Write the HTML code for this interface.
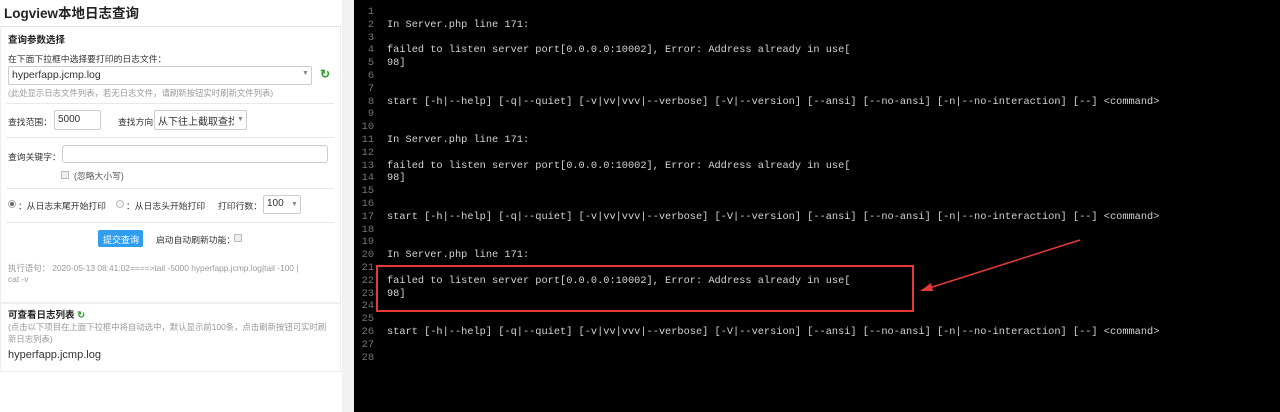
<!DOCTYPE html>
<html><head><meta charset="utf-8"><style>
*{margin:0;padding:0;box-sizing:border-box}
body{width:1280px;height:412px;background:#fff;font-family:"Liberation Sans","Noto Sans CJK SC",sans-serif;position:relative;overflow:hidden;color:#333}
.a{position:absolute;white-space:nowrap}
.s{font-size:8.8px;color:#333}
.g{font-size:8.4px;color:#999}
.hr{position:absolute;left:6px;width:328px;height:1px;background:#e8e8e8}
.box{position:absolute;border:1px solid #ccc;border-radius:2px;background:#fff}
#term{position:absolute;left:354px;top:0;width:926px;height:412px;background:#000}
.ln{position:absolute;left:0;width:20px;text-align:right;color:#777;font:10.3px "Liberation Mono",monospace}
.tx{position:absolute;left:33px;color:#d4d4d4;font:10.3px "Liberation Mono",monospace;white-space:pre}
</style></head><body>
<div style="position:absolute;left:342px;top:0;width:12px;height:412px;background:#f1f1f1"></div>
<div class="a" style="left:4px;top:2px;font-size:13.5px;font-weight:bold;color:#222">Logview本地日志查询</div>
<div style="position:absolute;left:0;top:26px;width:341px;height:1px;background:#e5e5e5"></div>
<div style="position:absolute;left:0;top:27px;width:341px;height:277px;border:1px solid #eee;border-top:none"></div>
<div class="a" style="left:8px;top:32px;font-size:9.5px;font-weight:bold;color:#222">查询参数选择</div>
<div class="a s" style="left:8px;top:52px">在下面下拉框中选择要打印的日志文件：</div>
<div class="box" style="left:8px;top:66px;width:304px;height:19px"></div>
<div class="a" style="left:12px;top:69px;font-size:10.5px;color:#333">hyperfapp.jcmp.log</div>
<div class="a" style="left:302px;top:70px;font-size:7px;color:#888">▼</div>
<div class="a" style="left:320px;top:67px;font-size:12px;color:#2a9a2a;font-weight:bold">↻</div>
<div class="a g" style="left:8px;top:87px">(此处显示日志文件列表，若无日志文件，请刷新按钮实时刷新文件列表)</div>
<div class="hr" style="top:103px"></div>
<div class="a s" style="left:8px;top:115px">查找范围：</div>
<div class="box" style="left:54px;top:110px;width:47px;height:20px"></div>
<div class="a" style="left:58px;top:114px;font-size:10px">5000</div>
<div class="a s" style="left:118px;top:115px">查找方向</div>
<div class="box" style="left:154px;top:110px;width:93px;height:20px"></div>
<div class="a" style="left:158px;top:113px;font-size:10px;overflow:hidden;width:76px">从下往上截取查找</div>
<div class="a" style="left:237px;top:116px;font-size:7px;color:#888">▼</div>
<div class="hr" style="top:137px"></div>
<div class="a s" style="left:8px;top:150px">查询关键字：</div>
<div class="box" style="left:62px;top:145px;width:266px;height:18px;border-radius:3px"></div>
<div style="position:absolute;left:61px;top:171px;width:8px;height:8px;border:1px solid #bbb;background:#eee"></div>
<div class="a s" style="left:74px;top:169px;color:#555">(忽略大小写)</div>
<div class="hr" style="top:188px"></div>
<div style="position:absolute;left:8px;top:200px;width:8px;height:8px;border:1px solid #aaa;border-radius:50%;background:#fff"><div style="width:4px;height:4px;margin:1px;background:#666;border-radius:50%"></div></div>
<div class="a s" style="left:18px;top:199px">：从日志末尾开始打印</div>
<div style="position:absolute;left:116px;top:200px;width:8px;height:8px;border:1px solid #bbb;border-radius:50%;background:#f4f4f4"></div>
<div class="a s" style="left:126px;top:199px">：从日志头开始打印</div>
<div class="a s" style="left:218px;top:199px">打印行数：</div>
<div class="box" style="left:263px;top:195px;width:38px;height:19px"></div>
<div class="a" style="left:267px;top:198px;font-size:10px">100</div>
<div class="a" style="left:291px;top:201px;font-size:7px;color:#888">▼</div>
<div class="hr" style="top:222px"></div>
<div style="position:absolute;left:98px;top:230px;width:45px;height:17px;background:#2f9ef0;border-radius:2px"></div>
<div class="a" style="left:103px;top:233px;font-size:9px;color:#fff">提交查询</div>
<div class="a s" style="left:156px;top:233px">启动自动刷新功能：</div>
<div style="position:absolute;left:234px;top:234px;width:8px;height:8px;border:1px solid #bbb;background:#eee"></div>
<div class="a g" style="left:8px;top:262px;color:#999">执行语句： 2020-05-13 08:41:02====&gt;tail -5000 hyperfapp.jcmp.log|tail -100 |</div>
<div class="a g" style="left:8px;top:274px">cat -v</div>
<div style="position:absolute;left:0;top:302px;width:341px;height:70px;border:1px solid #eee"></div>
<div class="a" style="left:8px;top:307px;font-size:9.5px;font-weight:bold;color:#222">可查看日志列表 <span style="color:#2a9a2a">↻</span></div>
<div class="a g" style="left:8px;top:321px">(点击以下项目在上面下拉框中将自动选中，默认显示前100条，点击刷新按钮可实时刷</div>
<div class="a g" style="left:8px;top:333px">新日志列表)</div>
<div class="a" style="left:8px;top:349px;font-size:11px;color:#333">hyperfapp.jcmp.log</div>

<div id="term">
<div class="ln" style="top:6px">1</div>
<div class="ln" style="top:18.8px">2</div><div class="tx" style="top:18.8px">In Server.php line 171:</div>
<div class="ln" style="top:31.6px">3</div>
<div class="ln" style="top:44.4px">4</div><div class="tx" style="top:44.4px">failed to listen server port[0.0.0.0:10002], Error: Address already in use[</div>
<div class="ln" style="top:57.2px">5</div><div class="tx" style="top:57.2px">98]</div>
<div class="ln" style="top:70px">6</div>
<div class="ln" style="top:82.8px">7</div>
<div class="ln" style="top:95.6px">8</div><div class="tx" style="top:95.6px">start [-h|--help] [-q|--quiet] [-v|vv|vvv|--verbose] [-V|--version] [--ansi] [--no-ansi] [-n|--no-interaction] [--] &lt;command&gt;</div>
<div class="ln" style="top:108.4px">9</div>
<div class="ln" style="top:121.2px">10</div>
<div class="ln" style="top:134px">11</div><div class="tx" style="top:134px">In Server.php line 171:</div>
<div class="ln" style="top:146.8px">12</div>
<div class="ln" style="top:159.6px">13</div><div class="tx" style="top:159.6px">failed to listen server port[0.0.0.0:10002], Error: Address already in use[</div>
<div class="ln" style="top:172.4px">14</div><div class="tx" style="top:172.4px">98]</div>
<div class="ln" style="top:185.2px">15</div>
<div class="ln" style="top:198px">16</div>
<div class="ln" style="top:210.8px">17</div><div class="tx" style="top:210.8px">start [-h|--help] [-q|--quiet] [-v|vv|vvv|--verbose] [-V|--version] [--ansi] [--no-ansi] [-n|--no-interaction] [--] &lt;command&gt;</div>
<div class="ln" style="top:223.6px">18</div>
<div class="ln" style="top:236.4px">19</div>
<div class="ln" style="top:249.2px">20</div><div class="tx" style="top:249.2px">In Server.php line 171:</div>
<div class="ln" style="top:262px">21</div>
<div class="ln" style="top:274.8px">22</div><div class="tx" style="top:274.8px">failed to listen server port[0.0.0.0:10002], Error: Address already in use[</div>
<div class="ln" style="top:287.6px">23</div><div class="tx" style="top:287.6px">98]</div>
<div class="ln" style="top:300.4px">24</div>
<div class="ln" style="top:313.2px">25</div>
<div class="ln" style="top:326px">26</div><div class="tx" style="top:326px">start [-h|--help] [-q|--quiet] [-v|vv|vvv|--verbose] [-V|--version] [--ansi] [--no-ansi] [-n|--no-interaction] [--] &lt;command&gt;</div>
<div class="ln" style="top:338.8px">27</div>
<div class="ln" style="top:351.6px">28</div>
</div>
<div style="position:absolute;left:376px;top:265px;width:538px;height:47px;border:2px solid #e53a3a"></div>
<svg style="position:absolute;left:0;top:0" width="1280" height="412"><line x1="1080" y1="240" x2="926" y2="289" stroke="#e53a3a" stroke-width="1.5"/><polygon points="920,291 931,283 933,291" fill="#e53a3a"/></svg>
</body></html>
